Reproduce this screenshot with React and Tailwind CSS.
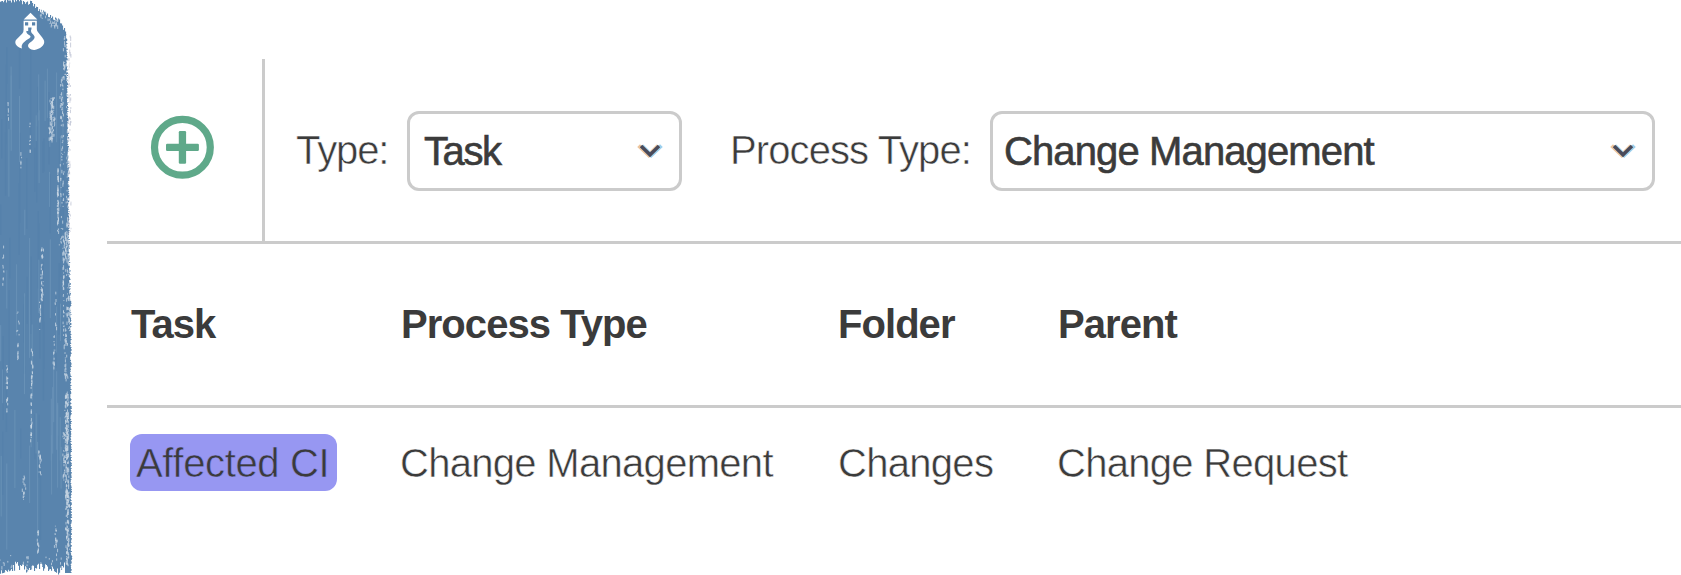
import React from "react";

function makeRandom(seed) {
  let s = seed;
  return () => {
    s = (s * 1664525 + 1013904223) % 4294967296;
    return s / 4294967296;
  };
}

function edgeAt(points, v) {
  for (let i = 1; i < points.length; i++) {
    if (v <= points[i][0]) {
      const [a, b] = points[i - 1];
      const [c, d] = points[i];
      return b + ((d - b) * (v - a)) / (c - a);
    }
  }
  return points[points.length - 1][1];
}

const TOP = [[0, 3], [2, 0], [19, 0], [22, 2], [32, 3], [35, 7], [42, 11], [46, 15], [54, 18], [58, 20], [61, 22], [62, 28], [66, 32], [72, 38]];
const BOTTOM = [[0, 572], [12, 570], [16, 564], [20, 567], [30, 570], [40, 567], [50, 569], [58, 571], [64, 566], [72, 574]];
const RIGHT = [[0, 67], [40, 67.5], [60, 68], [100, 68.5], [180, 69.5], [200, 69.5], [250, 70], [300, 71.5], [575, 72.3]];

function brush() {
  const r = makeRandom(71);
  let body = "";
  for (let x = 0; x < 66; x++) {
    const t = Math.max(0, edgeAt(TOP, x) + (r() - 0.5) * 5);
    const b = edgeAt(BOTTOM, x) + (r() - 0.5) * 8;
    body += `M${x} ${t.toFixed(1)}h1.1V${b.toFixed(1)}h-1.1z`;
  }
  for (let y = 34; y < 573; y++) {
    const w = edgeAt(RIGHT, y) - 65 - r() * 1.6;
    body += `M65 ${y}h${w.toFixed(1)}v1.1h-${w.toFixed(1)}z`;
  }
  let shades = "";
  let lights = "";
  for (let i = 0; i < 90; i++) {
    const d = `M${(r() * 64).toFixed(1)} ${(30 + r() * 440).toFixed(1)}v${(25 + r() * 70).toFixed(1)}`;
    if (i % 2) shades += d;
    else lights += d;
  }
  return { body, shades, lights };
}

// x, top, bottom, spread, amount
const SCRAPES = [
  [52, 95, 140, 3.4, 85], [62, 75, 165, 2.4, 45], [58, 168, 232, 0.9, 60], [62, 168, 250, 3, 25],
  [42, 247, 300, 1.6, 40], [32, 345, 380, 1, 16], [31.3, 380, 442, 0.9, 32], [40, 450, 475, 2, 18],
  [7, 365, 415, 1, 20], [3, 245, 285, 1, 10], [8, 95, 120, 0.6, 6],
  [30, 115, 150, 0.6, 9], [21, 150, 180, 0.6, 5], [66, 230, 260, 3, 36],
  [68.5, 45, 200, 2, 120], [68.5, 200, 330, 3, 110], [63.5, 235, 335, 0.9, 40], [66, 328, 380, 2.4, 36],
  [67, 390, 500, 2.2, 190], [67.5, 490, 565, 2.2, 110], [64, 430, 480, 1.4, 24],
  [24, 475, 500, 2, 16], [38, 530, 555, 1.4, 15], [56, 525, 555, 2, 18], [18, 340, 360, 1, 8],
  [54, 335, 370, 1, 14], [56, 290, 330, 1, 8], [18, 310, 335, 2, 7], [40, 300, 330, 0.8, 10],
  [65, 35, 80, 3, 28], [43, 4, 18, 4, 26], [54, 17, 26, 7, 24], [30, 555, 570, 55, 40],
];

function scrapes() {
  const r = makeRandom(19);
  let d = "";
  SCRAPES.forEach(([x, a, b, spread, n]) => {
    for (let i = 0; i < n; i++) {
      const px = x + (r() + r() - 1) * spread;
      const py = a + r() * (b - a);
      d += `M${px.toFixed(1)} ${py.toFixed(1)}v${(0.8 + r() * 3).toFixed(1)}`;
    }
  });
  return d;
}

function flecks() {
  const r = makeRandom(5);
  let d = "";
  for (let i = 0; i < 60; i++) {
    const y = 35 + r() * 210;
    d += `M${(68.5 + r() * 2.5).toFixed(1)} ${y.toFixed(1)}v${(1 + r() * 4).toFixed(1)}`;
  }
  return d;
}

const BRUSH = brush();
const SCRAPE_PATH = scrapes();
const FLECK_PATH = flecks();

function BrushStroke() {
  return (
    <svg className="block h-[575px] w-[107px]" viewBox="0 0 107 575" aria-hidden="true">
      <path d={BRUSH.body} fill="#5984ad" />
      <path d={BRUSH.shades} stroke="#517da9" strokeWidth="1.4" opacity=".4" />
      <path d={BRUSH.lights} stroke="#85abc9" strokeWidth="1" opacity=".35" />
      <path d={FLECK_PATH} stroke="#9199b6" strokeWidth=".8" opacity=".6" />
      <path d={SCRAPE_PATH} stroke="#fff" strokeWidth=".8" opacity=".65" />
      <g fill="#fff">
        <path d="M30.5 12.7 37.3 19.5H23.7z" />
        <path fillRule="evenodd" d="M23.6 20.7H36.8V31H31.5V27.5H28.2V31H23.6zM25 22.3V25.4H28.2V22.3zM32 22.3V25.4H35.2V22.3z" />
        <path d="M23.6 30.5H26.3C26 33.2 27.6 34.4 29.8 35.4C31.4 36.3 30.5 37.6 27.8 39.3C23.3 42.2 20.8 44.7 22 48.5C18 47.4 15.2 45 15.3 42C15.6 38.2 23.2 35 23.6 30.5z" />
        <path d="M31.3 29.5H36.8C37.2 32.7 42.7 36.5 44.1 40.8C45.2 45.5 39.7 49.3 34.5 49.9C30.8 50.2 27.3 47.5 28.2 44.7C29 42.3 34.3 40.8 34.6 37.2C34.8 34.4 29.8 33.5 31.3 29.5z" />
      </g>
    </svg>
  );
}

function AddIcon() {
  return (
    <svg className="block size-16" viewBox="0 0 64 64" fill="#5fa98a">
      <circle cx="32.4" cy="32.3" r="27.9" fill="none" stroke="#5fa98a" strokeWidth="7.2" />
      <rect x="28.8" y="16" width="7.3" height="32.8" rx="1.2" />
      <rect x="16" y="28.7" width="32.9" height="7.3" rx="1.2" />
    </svg>
  );
}

function Chevron() {
  return (
    <svg className="block h-5 w-7" viewBox="0 0 28 20" fill="none" strokeWidth="4">
      <path d="M2.6 4.6 12.8 14.2 22 5" stroke="#e7b27c" opacity=".75" />
      <path d="M6 5 15.2 14.2 25.4 4.6" stroke="#83c4ea" opacity=".8" />
      <path d="M5 5 14 13.8 23 5" stroke="#4a4a5a" strokeWidth="3.4" />
    </svg>
  );
}

function Select({ value, className }) {
  return (
    <button className={`flex h-20 items-center justify-between rounded-xl border-3 border-[#cbcbcb] bg-white ${className}`}>
      <span className="[-webkit-text-stroke:0.6px_#3b3b3b]">{value}</span>
      <Chevron />
    </button>
  );
}

const light = "[-webkit-text-stroke:0.5px_#fff]";

export default function App() {
  return (
    <div className="flex h-[575px] w-[1681px] overflow-hidden bg-white font-['Liberation_Sans',Arial,sans-serif] text-[40px] leading-[46px] whitespace-nowrap text-[#3b3b3b]">
      <aside className="w-[107px] shrink-0">
        <BrushStroke />
      </aside>
      <main className="min-w-0 flex-1">
        <div className="flex h-[244px] border-b-3 border-[#cbcbcb] pt-[59px]">
          <div className="flex w-[158px] shrink-0 border-r-3 border-[#cbcbcb] pt-14 pl-[43px]">
            <AddIcon />
          </div>
          <div className="flex items-start pt-[52px]">
            <div className="flex h-20 items-center">
              <span className={`w-[142px] pb-0.5 pl-[31px] tracking-[-1.1px] ${light}`}>Type:</span>
              <Select value="Task" className="w-[275px] pr-[15px] pl-3.5 tracking-[-1.4px]" />
              <span className={`w-[308px] pb-0.5 pl-12 tracking-[-0.9px] ${light}`}>Process Type:</span>
              <Select value="Change Management" className="w-[665px] pr-[15px] pl-[11px] tracking-[-0.88px]" />
            </div>
          </div>
        </div>
        <div className="grid h-[164px] grid-cols-[270px_437px_220px_1fr] items-start border-b-3 border-[#cbcbcb] pt-[57px] font-bold tracking-[-0.95px]">
          <span className="pl-6">Task</span>
          <span className="pl-6">Process Type</span>
          <span className="pl-6">Folder</span>
          <span className="pl-6">Parent</span>
        </div>
        <div className="grid grid-cols-[270px_437px_220px_1fr] items-center pt-[26px] tracking-[-0.7px]">
          <span className="ml-[23px] h-[57px] w-[207px] rounded-xl bg-[#9797f2] pt-1.5 pl-1.5 tracking-[-0.35px] [-webkit-text-stroke:0.5px_#9797f2]">Affected CI</span>
          <span className={`pl-[23px] ${light}`}>Change Management</span>
          <span className={`pl-6 ${light}`}>Changes</span>
          <span className={`pl-[23px] ${light}`}>Change Request</span>
        </div>
      </main>
    </div>
  );
}
